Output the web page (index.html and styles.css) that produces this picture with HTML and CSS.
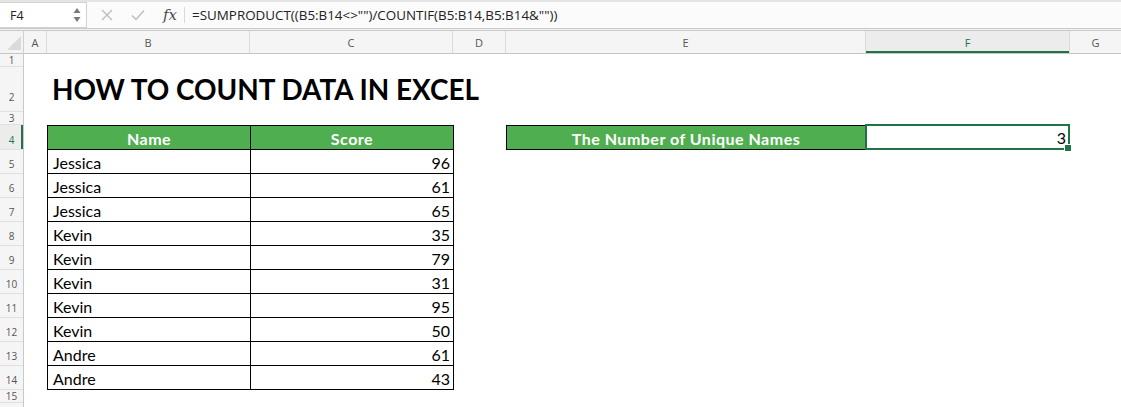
FILE: index.html
```html
<!DOCTYPE html>
<html>
<head>
<meta charset="utf-8">
<link rel="stylesheet" href="styles.css">
</head>
<body>
<div class="fbar">
  <div class="namebox">
    <span class="ref">F4</span>
    <svg class="spin" width="8" height="16" viewBox="0 0 8 16"><polygon points="4,1 7.5,6 0.5,6" fill="#7a7a7a"/><polygon points="0.5,10 7.5,10 4,15" fill="#7a7a7a"/></svg>
  </div>
  <div class="tools">
    <svg class="ico" width="12" height="12" viewBox="0 0 12 12"><path d="M1 1L11 11M11 1L1 11" stroke="#bdbdbd" stroke-width="1.4" fill="none"/></svg>
    <svg class="ico" width="14" height="12" viewBox="0 0 14 12"><path d="M1 6.5L5 10.5L13 1.5" stroke="#bdbdbd" stroke-width="1.4" fill="none"/></svg>
    <span class="fx">fx</span>
  </div>
  <div class="divider"></div>
  <div class="formula">=SUMPRODUCT((B5:B14&lt;&gt;"")/COUNTIF(B5:B14,B5:B14&amp;""))</div>
</div>
<div class="sep"></div>
<div class="sheet">
  <div class="corner"><svg width="14" height="14" viewBox="0 0 14 14"><polygon points="14,0 14,14 0,14" fill="#dadada"/></svg></div>
  <div class="colheads">
    <div class="ch">A</div>
    <div class="ch">B</div>
    <div class="ch">C</div>
    <div class="ch">D</div>
    <div class="ch">E</div>
    <div class="ch sel">F</div>
    <div class="ch last">G</div>
  </div>
  <div class="rowheads">
    <div class="rh r-s">1</div>
    <div class="rh r-t">2</div>
    <div class="rh r-s">3</div>
    <div class="rh r-h sel">4</div>
    <div class="rh r-n">5</div>
    <div class="rh r-n">6</div>
    <div class="rh r-n">7</div>
    <div class="rh r-n">8</div>
    <div class="rh r-n">9</div>
    <div class="rh r-n">10</div>
    <div class="rh r-n">11</div>
    <div class="rh r-n">12</div>
    <div class="rh r-n">13</div>
    <div class="rh r-n">14</div>
    <div class="rh r-s">15</div>
    <div class="rh rest"></div>
  </div>
  <div class="cells">
    <div class="title">HOW TO COUNT DATA IN EXCEL</div>
    <div class="table">
      <div class="th">Name</div><div class="th">Score</div>
      <div class="td">Jessica</div><div class="td num">96</div>
      <div class="td">Jessica</div><div class="td num">61</div>
      <div class="td">Jessica</div><div class="td num">65</div>
      <div class="td">Kevin</div><div class="td num">35</div>
      <div class="td">Kevin</div><div class="td num">79</div>
      <div class="td">Kevin</div><div class="td num">31</div>
      <div class="td">Kevin</div><div class="td num">95</div>
      <div class="td">Kevin</div><div class="td num">50</div>
      <div class="td">Andre</div><div class="td num">61</div>
      <div class="td">Andre</div><div class="td num">43</div>
    </div>
    <div class="sumlabel">The Number of Unique Names</div>
    <div class="sumvalue">3<span class="handle"></span></div>
  </div>
</div>
</body>
</html>
```
FILE: styles.css
```css
html, body {
  margin: 0;
  padding: 0;
  background: #ffffff;
  width: 1121px;
  height: 407px;
  overflow: hidden;
  font-family: Lato, "Open Sans", sans-serif;
}

.fbar {
  height: 28px;
  display: flex;
  align-items: center;
  background: #fbfbfb;
  border-top: 2px solid #e4e4e4;
  box-sizing: border-box;
}

.namebox {
  width: 87px;
  height: 26px;
  box-sizing: border-box;
  background: #ffffff;
  border: 1px solid #d2d2d2;
  border-left: none;
  display: flex;
  align-items: center;
  justify-content: space-between;
  padding: 0 5px 0 10px;
  align-self: flex-start;
}

.ref {
  font-family: "Open Sans", sans-serif;
  font-size: 12.5px;
  color: #222;
}

.spin {
  display: block;
}

.tools {
  display: flex;
  align-items: center;
  padding-left: 14px;
}

.tools .ico {
  display: block;
  margin-right: 18px;
}

.fx {
  font-family: "DejaVu Serif", "Liberation Serif", serif;
  font-style: italic;
  font-size: 15px;
  color: #4a4a4a;
}

.divider {
  width: 1px;
  height: 16px;
  background: #d9d9d9;
  margin: 0 7px 0 7px;
}

.formula {
  font-family: "Open Sans", sans-serif;
  font-size: 13.4px;
  color: #222;
  white-space: nowrap;
}

.sep {
  height: 1px;
  border-top: 1px solid #c9c9c9;
  border-bottom: 1px solid #c9c9c9;
  background: #f2f2f2;
}

.sheet {
  display: grid;
  grid-template-columns: 24px 1fr;
  grid-template-rows: 23px 1fr;
  height: 376px;
}

.corner {
  background: #f4f4f4;
  border-right: 1px solid #d0d0d0;
  border-bottom: 1px solid #c6c6c6;
  box-sizing: border-box;
  display: flex;
  align-items: flex-end;
  justify-content: flex-end;
  padding: 0 2px 3px 0;
}

.corner svg {
  display: block;
}

.colheads {
  display: grid;
  grid-template-columns: 23px 203px 203px 53px 360px 204px 1fr;
  background: #f5f5f5;
  border-bottom: 1px solid #c6c6c6;
  box-sizing: border-box;
}

.ch {
  border-right: 1px solid #dadada;
  display: flex;
  align-items: center;
  justify-content: center;
  font-family: "Open Sans", sans-serif;
  font-size: 11px;
  color: #555;
  padding-top: 1px;
}

.ch.sel {
  background: #ececec;
  color: #217346;
  box-shadow: inset 0 -2px 0 #217346;
}

.ch.last {
  border-right: none;
}

.rowheads {
  display: flex;
  flex-direction: column;
  background: #f5f5f5;
  border-right: 1px solid #c9c9c9;
  box-sizing: border-box;
}

.rh {
  box-sizing: border-box;
  border-bottom: 1px solid #e0e0e0;
  display: flex;
  align-items: center;
  justify-content: center;
  font-family: "Open Sans", sans-serif;
  font-size: 10px;
  color: #555;
  flex: none;
}

.r-s { height: 13px; }
.r-t { height: 45px; align-items: flex-end; padding-bottom: 7px; }
.r-h { height: 25px; padding-top: 5px; }
.r-n { height: 24px; padding-top: 5px; }
.rh.rest { flex: 1; border-bottom: none; }

.rh.sel {
  color: #217346;
  box-shadow: inset -2px 0 0 #217346;
  background: #ececec;
}

.cells {
  display: grid;
  grid-template-columns: 23px 203px 203px 53px 360px 204px 1fr;
  grid-template-rows: 13px 45px 13px 25px repeat(10, 24px) 13px 1fr;
  background: #ffffff;
}

.title {
  grid-column: 2 / 6;
  grid-row: 2;
  align-self: end;
  padding-left: 5px;
  font-family: Lato, "Open Sans", sans-serif;
  font-weight: 700;
  font-size: 27.9px;
  line-height: 1;
  color: #000;
  padding-bottom: 8px;
  white-space: nowrap;
}

.table {
  grid-column: 2 / 4;
  grid-row: 4 / 15;
  display: grid;
  grid-template-columns: 202px 202px;
  grid-auto-rows: 23px;
  gap: 1px;
  padding: 1px;
  background: #000;
  width: 407px;
  box-sizing: border-box;
  align-self: start;
  height: 265px;
}

.th {
  background: #4faf50;
  color: #fff;
  font-weight: 700;
  font-size: 16px;
  letter-spacing: 0.5px;
  display: flex;
  align-items: center;
  justify-content: center;
  padding-top: 1px;
}

.td {
  background: #fff;
  color: #000;
  font-size: 16px;
  display: flex;
  align-items: center;
  padding: 1px 0 0 5px;
}

.td.num {
  justify-content: flex-end;
  padding: 1px 3px 0 0;
}

.sumlabel {
  grid-column: 5;
  grid-row: 4;
  background: #4faf50;
  border: 1px solid #000;
  box-sizing: border-box;
  color: #fff;
  font-weight: 700;
  font-size: 16px;
  letter-spacing: 0.5px;
  display: flex;
  align-items: center;
  justify-content: center;
  padding-top: 1px;
}

.sumvalue {
  grid-column: 6;
  grid-row: 4;
  position: relative;
  margin: -1px 0 0 -1px;
  border: 2px solid #217346;
  background: #fff;
  font-size: 16px;
  display: flex;
  align-items: center;
  justify-content: flex-end;
  padding: 1px 2px 0 0;
}

.handle {
  position: absolute;
  right: -4px;
  bottom: -4px;
  width: 6px;
  height: 6px;
  background: #217346;
  border: 1px solid #fff;
}
```
